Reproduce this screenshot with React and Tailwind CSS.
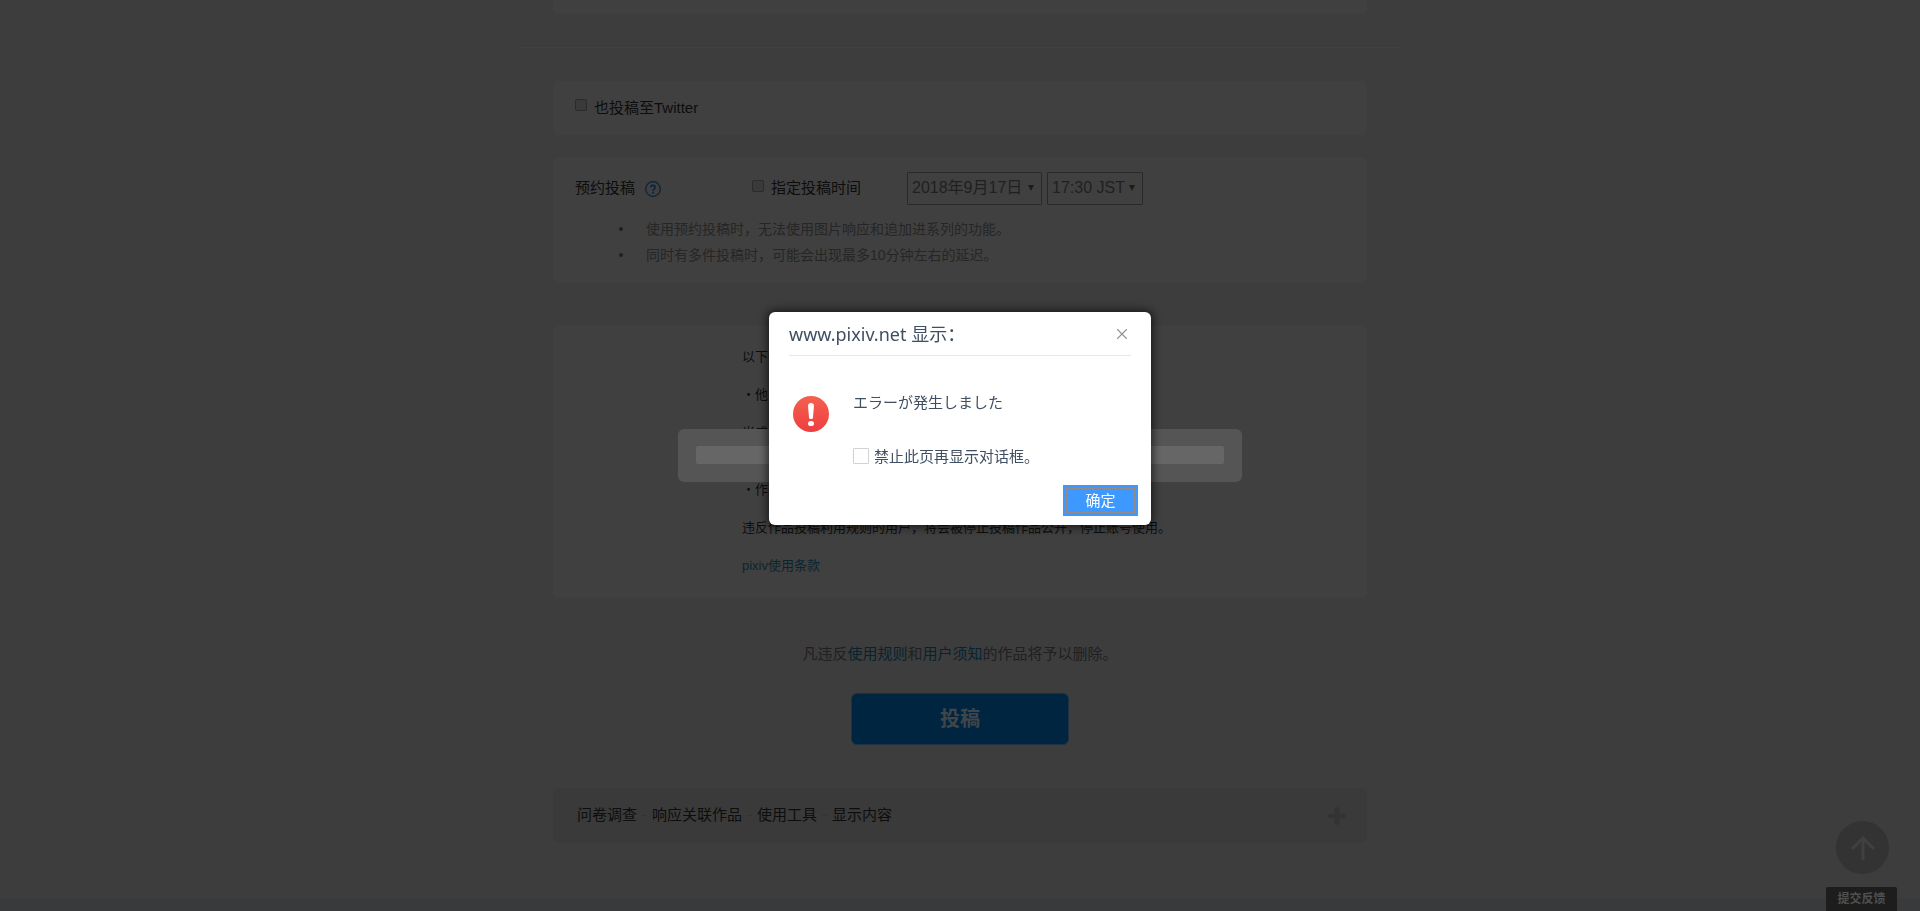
import { Plus, X } from 'lucide-react';

const NOTES = [
  '使用预约投稿时，无法使用图片响应和追加进系列的功能。',
  '同时有多件投稿时，可能会出现最多10分钟左右的延迟。',
];

const SECTIONS = ['问卷调查', '响应关联作品', '使用工具', '显示内容'];

function Card({ className, children }) {
  return <section className={`mx-[33px] rounded-md bg-[#404040] ${className}`}>{children}</section>;
}

function DarkCheckbox({ id }) {
  return (
    <input
      id={id}
      type="checkbox"
      className="size-3 appearance-none rounded-xs border border-[#2b2b2b] bg-[#3a3a3a]"
    />
  );
}

function DateSelect({ label, value, className }) {
  return (
    <div className={`relative h-[33px] shrink-0 ${className}`}>
      <select
        aria-label={label}
        className="size-full appearance-none rounded-[1px] border border-[#292929] bg-transparent pb-[2px] pl-1 text-base text-[#202020]"
      >
        <option>{value}</option>
      </select>
      <svg viewBox="0 0 6 6" className="pointer-events-none absolute top-[13px] right-2 size-[6px] fill-[#1c1c1c]">
        <path d="M0 0h6L3 6z" />
      </svg>
    </div>
  );
}

/**
 * Reservation settings - scheduled posting time and its notes
 */
function ScheduleCard() {
  return (
    <Card className="mt-[22px] h-[125px] pt-[15px]">
      <div className="flex h-[33px] items-center pl-[22px] text-[15px] text-[#0d0d0d]">
        <span className="w-[60px]">预约投稿</span>
        <a href="#help" aria-label="帮助" className="ml-[10px]">
          <svg viewBox="0 0 16 16" fill="none" stroke="#06233b" className="size-4">
            <circle cx="8" cy="8" r="7.3" strokeWidth="1.2" />
            <path d="M5.9 6.3a2.1 2.1 0 1 1 3.2 1.8c-.8.5-1.1.8-1.1 1.7" strokeWidth="1.6" />
            <path d="M8 10.8v1.6" strokeWidth="1.7" />
          </svg>
        </a>
        <div className="ml-[91px] flex items-center gap-[7px]">
          <span className="flex pb-[6px]">
            <DarkCheckbox id="schedule" />
          </span>
          <label htmlFor="schedule" className="w-[92px]">指定投稿时间</label>
        </div>
        <div className="ml-[44px] flex gap-[5px]">
          <DateSelect label="日期" value="2018年9月17日" className="w-[135px]" />
          <DateSelect label="时间" value="17:30 JST" className="w-[96px]" />
        </div>
      </div>
      <ul className="mt-[11px] text-sm leading-[26px] text-[#262626]">
        {NOTES.map((note) => (
          <li key={note} className="flex items-center">
            <span className="ml-[66px] size-1 rounded-full bg-[#202020]" />
            <span className="ml-[23px]">{note}</span>
          </li>
        ))}
      </ul>
    </Card>
  );
}

function RulesCard() {
  return (
    <Card className="mt-11 h-[272px] pt-[21px] pl-[189px] text-[13px] leading-[19px] text-[#0d0d0d]">
      <div className="flex flex-col gap-[19px]">
        <p>以下作品禁止投稿。</p>
        <p>・他人的作品</p>
        <p>
          当成自己的作品投稿
          <br />
          的行为
        </p>
        <p>・作品以外的图片</p>
        <p>违反作品投稿利用规则的用户，将会被停止投稿作品公开，停止账号使用。</p>
        <a href="#terms" className="text-[#0b2530]">pixiv使用条款</a>
      </div>
    </Card>
  );
}

function LoadingBar() {
  return (
    <div className="fixed inset-0 flex items-center justify-center">
      <div className="h-[53px] w-[564px] rounded-md bg-[#555555] px-[18px] pt-[17px]">
        <div className="h-[18px] rounded-xs bg-[#666666]" />
      </div>
    </div>
  );
}

function AlertDialog() {
  return (
    <div className="fixed inset-0 flex items-start justify-center pt-[312px] font-['Noto_Sans','Noto_Sans_CJK_SC',sans-serif] text-[#3f4e60]">
      <div
        role="alertdialog"
        aria-labelledby="dialog-title"
        className="flex h-[213px] w-[382px] flex-col rounded-md bg-white shadow-[0_0_8px_2px_rgba(0,0,0,0.6)]"
      >
        <header className="mx-5 flex h-11 items-center justify-between border-b border-[#e6e7e9]">
          <h1 id="dialog-title" className="text-lg">www.pixiv.net 显示：</h1>
          <button type="button" aria-label="关闭">
            <X className="size-[18px] text-[#8c949c]" strokeWidth={1.5} />
          </button>
        </header>
        <div className="flex pt-[35px] pl-6 text-[15px] leading-[22px]">
          <svg viewBox="0 0 36 36" className="mt-[5px] size-9">
            <defs>
              <linearGradient id="alert-red" x1="0" y1="0" x2="0" y2="1">
                <stop offset="0" stopColor="#f4614f" />
                <stop offset="1" stopColor="#ee3e40" />
              </linearGradient>
            </defs>
            <circle cx="18" cy="18" r="18" fill="url(#alert-red)" />
            <path d="M15 9.500c0-1.500 1.300-2.500 3-2.500s3 1 3 2.500l-1 12c-.1 1-.9 1.500-2 1.500s-1.900-.5-2-1.500z" fill="#fff" />
            <ellipse cx="18" cy="27.500" rx="3" ry="2.600" fill="#fff" />
          </svg>
          <div className="ml-6 flex flex-col gap-8">
            <p lang="ja" className="font-['Noto_Sans','Noto_Sans_CJK_JP',sans-serif]">エラーが発生しました</p>
            <div className="flex items-center gap-[5px]">
              <input
                id="mute"
                type="checkbox"
                className="size-4 appearance-none rounded-[1px] border border-[#cfd2d6]"
              />
              <label htmlFor="mute">禁止此页再显示对话框。</label>
            </div>
          </div>
        </div>
        <div className="mt-auto flex justify-end pr-[13px] pb-[9px]">
          <button type="button" className="h-[31px] w-[75px] bg-[#3d99ff] p-[3px] text-[15px] text-white">
            <span className="flex size-full items-center justify-center border border-dotted border-[#9a8f88]">
              确定
            </span>
          </button>
        </div>
      </div>
    </div>
  );
}

export default function App() {
  return (
    <div
      lang="zh-CN"
      className="flex h-screen flex-col overflow-hidden bg-[#3d3d3d] font-['Liberation_Sans','Noto_Sans_CJK_SC',sans-serif]"
    >
      <main className="mx-auto w-[880px] max-w-full shrink-0">
        <div className="mx-[33px] h-[14px] rounded-b-md bg-[#404040]" />
        <hr className="mt-[33px] border-[#424242]" />

        <Card className="mt-[33px] flex h-[54px] items-center gap-[7px] pl-[22px] text-[15px] text-[#0d0d0d]">
          <span className="flex pb-[6px]">
            <DarkCheckbox id="twitter" />
          </span>
          <label htmlFor="twitter">也投稿至Twitter</label>
        </Card>

        <ScheduleCard />
        <RulesCard />

        <p className="mt-11 text-center text-[15px] leading-6 text-[#202020]">
          凡违反
          <a href="#rules" className="text-[#06232f]">使用规则</a>
          和
          <a href="#notice" className="text-[#06232f]">用户须知</a>
          的作品将予以删除。
        </p>
        <div className="mt-[27px] flex justify-center">
          <button
            type="button"
            className="h-[52px] w-[218px] rounded-md border border-[#1f3045] bg-[#002541] text-xl font-bold text-[#404549]"
          >
            投稿
          </button>
        </div>

        <section className="mx-[33px] mt-[43px] flex h-[55px] items-center rounded-md bg-[#3a3a3a] pr-[21px] pl-6 text-[15px] text-[#0d0d0d]">
          {SECTIONS.map((name, i) => (
            <span key={name} className="flex items-center">
              {i > 0 && <span className="mx-[5px] h-px w-[5px] bg-[#343434]" />}
              {name}
            </span>
          ))}
          <button type="button" aria-label="展开" className="ml-auto">
            <Plus className="size-[18px] scale-125 text-[#333333]" strokeWidth={5} />
          </button>
        </section>
      </main>

      <footer className="mt-auto h-[13px] shrink-0 bg-[#383a3c]" />

      <LoadingBar />

      <div className="fixed right-[23px] bottom-0 flex w-[71px] flex-col items-center gap-[13px]">
        <button
          type="button"
          aria-label="返回顶部"
          className="ml-[2px] flex size-[53px] items-center justify-center rounded-full bg-[#333333]"
        >
          <svg viewBox="0 0 26 26" fill="none" stroke="#404040" strokeWidth="3" className="size-[26px]">
            <path d="M13 25V3M2 14 13 3l11 11" />
          </svg>
        </button>
        <button type="button" className="h-6 w-full rounded-t-xs bg-[#1d1d1d] text-xs font-bold text-[#505050]">
          提交反馈
        </button>
      </div>

      <AlertDialog />
    </div>
  );
}
